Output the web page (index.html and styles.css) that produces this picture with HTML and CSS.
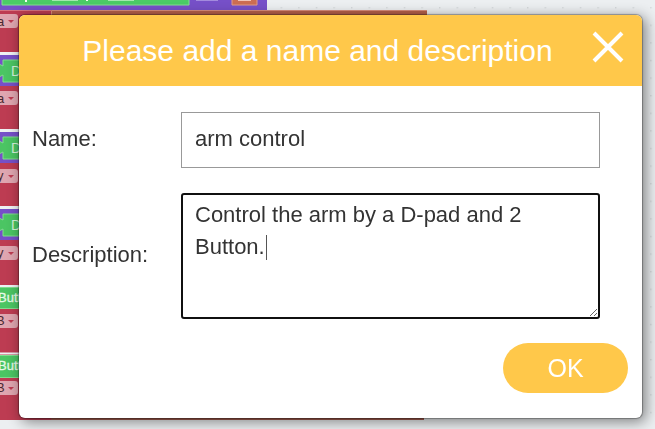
FILE: index.html
```html
<!DOCTYPE html>
<html lang="en">
<head>
<meta charset="utf-8">
<meta name="viewport" content="width=device-width, initial-scale=1">
<title>Please add a name and description</title>
<link rel="stylesheet" href="styles.css">
</head>
<body>
<svg class="workspace" aria-hidden="true">
  <defs>
    <pattern id="dots" x="-1" y="7" width="17.6" height="17.6" patternUnits="userSpaceOnUse">
      <rect width="1.4" height="1.4" fill="#d3d7d9"/>
    </pattern>
    <!-- value block that follows each red block -->
    <g id="value">
      <rect x="0" y="0" width="40" height="3" fill="#eef1f3"/>
      <rect x="-4" y="3" width="44" height="31" fill="#7650c8"/>
      <path d="M3 8H40V30H3V23L-1 25V12L3 14Z" fill="#4bc563" stroke="#80dc8d"/>
      <text x="11" y="24" font-size="14" fill="#d5f3da">D</text>
    </g>
    <g id="field">
      <path d="M-4 0H15Q18 0 18 3V11Q18 14 15 14H-4Z" fill="#dfa6b0"/>
      <path d="M8 6H14L11 9Z" fill="#bd3c52"/>
    </g>
  </defs>
  <rect width="100%" height="100%" fill="#eceff1"/>
  <rect width="100%" height="100%" fill="url(#dots)"/>
  <rect x="0" y="0" width="267" height="10" fill="#7650c8"/>
  <path d="M2 0V5H189V0" fill="#4bcb66" stroke="#85df92"/>
  <path d="M26 0V2M87 0V1" stroke="#f3fff3" stroke-width="2"/>
  <path d="M52 0H78M108 0H134" stroke="#a5e7af" stroke-width="2"/>
  <path d="M196 0H218" stroke="#a38bdd" stroke-width="2"/>
  <path d="M232 0V5H257V0" fill="#cc6d52" stroke="#e39c87"/>
  <path d="M238 0H251" stroke="#f0c5b8" stroke-width="2"/>
  <rect x="0" y="10" width="51" height="410" fill="#bd3c52"/>
  <rect x="51" y="10" width="376" height="10" fill="#b5604a"/>
  <path d="M0 10.500H51" stroke="#d5727f"/>
  <path d="M51.500 20V10.500H427" fill="none" stroke="#d98d7b"/>
  <rect x="51" y="410" width="373" height="10" fill="#a35b4f"/>
  <use href="#value" y="52"/>
  <use href="#value" y="129"/>
  <use href="#value" y="206"/>
  <use href="#field" y="14"/>
  <use href="#field" y="91"/>
  <use href="#field" y="169"/>
  <use href="#field" y="246"/>
  <use href="#field" y="314"/>
  <use href="#field" y="381"/>
  <path d="M0 286H40M0 353.500H40" stroke="#eef1f3" stroke-width="2"/>
  <path d="M-2 287.500H40V308.500H-2ZM-2 355.500H40V377.500H-2Z" fill="#4bc563" stroke="#80dc8d"/>
  <g fill="#4a2930">
    <text x="-3" y="26">a</text>
    <text x="-3" y="103">a</text>
    <text x="-3" y="180">y</text>
    <text x="-3" y="257">y</text>
    <text x="-4" y="325">B</text>
    <text x="-4" y="392">B</text>
  </g>
  <g fill="#e6f9e8" stroke="#e6f9e8" stroke-width="0.3">
    <text x="-2" y="302">Butt</text>
    <text x="-2" y="370">Butt</text>
  </g>
</svg>

<form class="dialog" role="dialog" aria-labelledby="title">
  <header class="dialog-head">
    <h1 id="title">Please add a name and description</h1>
    <button class="close" type="button" aria-label="Close">
      <svg viewBox="0 0 32 32" aria-hidden="true"><path d="M2 2L30 30M30 2L2 30"/></svg>
    </button>
  </header>
  <div class="fields">
    <label for="name">Name:</label>
    <input id="name" type="text" value="arm control">
    <label for="description">Description:</label>
    <div class="area">
      <textarea id="description">Control the arm by a D-pad and 2 Button.</textarea>
      <span class="caret"></span>
    </div>
  </div>
  <footer class="actions">
    <button class="ok" type="button">OK</button>
  </footer>
</form>
</body>
</html>
```
FILE: styles.css
```css
* {
  box-sizing: border-box;
}

body {
  margin: 0;
  padding: 15px 13px 11px 19px;
  background: #eceff1;
  color: #333;
  font-family: "Liberation Sans", Arial, sans-serif;
  font-size: 22px;
}

.workspace {
  position: fixed;
  inset: 0;
  width: 100%;
  height: 100%;
  font-size: 13px;
}

.dialog {
  position: relative;
  overflow: hidden;
  border-radius: 6px;
  background: #fff;
  box-shadow: 0 0 1px 1px rgba(0, 0, 0, 0.3), 3px 3px 14px 1px rgba(0, 0, 0, 0.45);
}

.dialog-head {
  display: flex;
  align-items: center;
  height: 71px;
  padding: 0 17px 0 25px;
  background: #ffc84a;
  color: #fff;
}

h1 {
  flex: 1;
  margin: 0;
  font-size: 30px;
  font-weight: 400;
  text-align: center;
  white-space: nowrap;
}

.close {
  width: 34px;
  height: 34px;
  margin-bottom: 8px;
  padding: 1px;
  border: 0;
  background: none;
}

.close svg {
  display: block;
  width: 32px;
  height: 32px;
  fill: none;
  stroke: #fff;
  stroke-width: 4;
}

.fields {
  display: grid;
  grid-template-columns: 137px 1fr;
  gap: 25px 12px;
  align-items: center;
  padding: 26px 42px 0 13px;
}

label {
  padding-bottom: 3px;
}

input,
textarea {
  display: block;
  width: 100%;
  margin: 0;
  color: #333;
  background: #fff;
  font: inherit;
  outline: 0;
}

input {
  height: 56px;
  padding: 0 13px 2px;
  border: 1px solid #999;
}

.area {
  position: relative;
}

textarea {
  height: 126px;
  padding: 4px 12px;
  border: 2px solid #101010;
  border-radius: 3px;
  line-height: 32px;
  resize: vertical;
}

.caret {
  position: absolute;
  top: 42px;
  left: 85px;
  width: 1px;
  height: 25px;
  background: #555;
}

.actions {
  display: flex;
  justify-content: flex-end;
  padding: 24px 14px 25px;
}

.ok {
  width: 125px;
  height: 50px;
  border: 0;
  border-radius: 25px;
  background: #ffc84a;
  color: #fff;
  font: inherit;
  font-size: 25px;
}
```
